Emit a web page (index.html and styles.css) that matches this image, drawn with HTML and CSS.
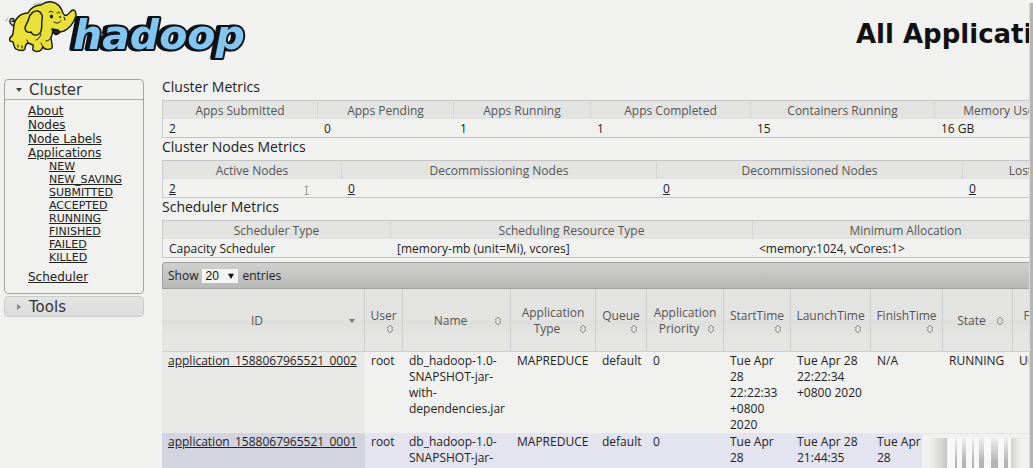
FILE: index.html
```html
<!DOCTYPE html>
<html lang="en">
<head>
<meta charset="utf-8">
<title>All Applications</title>
<link rel="stylesheet" href="styles.css">
</head>
<body>
<svg class="defs" aria-hidden="true">
  <symbol id="sort" viewBox="0 0 8 10"><path d="M1 4 4 1l3 3M1 6l3 3 3-3M1 4h1.5M5.500 4H7M1 6h1.500M5.500 6H7" fill="none" stroke="#8a8a8a" stroke-width="1"/></symbol>
  <symbol id="down" viewBox="0 0 8 10"><path d="M1 3h6L4 7z" fill="#777"/></symbol>
</svg>
<div class="page">
  <header class="top">
    <svg class="logo" viewBox="0 0 254 64" role="img" aria-label="hadoop">
      <text class="word" x="73" y="49">hadoop</text>
      <g fill="#e9e03a" stroke="#17170c" stroke-width="1.400" stroke-linejoin="round" stroke-linecap="round">
        <path d="M14 26c-3-1-5-4-4-6s4-2 4 0-2 2-2 1" fill="none"/>
        <path d="M28 13c-7 0-13 5-14 12-1 5 0 8-2 11-2 1-3 3-2 5l3 1c1 3 1 6 3 7 3 2 8 2 9 0 0-3 1-5 3-6l5 2c1 2-1 3 0 5 2 2 6 2 8 0l2-3c2 3 6 3 9 1 1-3-1-7-1-10l2-7c3 1 8 1 11 0 6-3 10-9 12-15 0-3-1-6-3-6s-3 3-6 5c-2 1-3 0-4-2-2-6-5-10-11-11-5-1-8 1-11 3-5 0-11 3-13 8z"/>
        <path d="M38 11c-4-1-8 3-9 7-1 5-4 7-4 10 0 4 4 5 6 4 2 4 6 4 9 1 3-4 1-9 2-13 1-3 0-8-4-9z"/>
        <path d="M52 29c1 5 5 8 8 3l-2-2z" fill="#222"/>
        <path d="M41 34c-1 3-2 5-5 6M49 12q2-2 4 0M57 13q2-2 3 0M54 22c3 2 5 1 7-1M64 17l1 3M51 37c-1 3-3 4-5 4M41 43l2 4M27 40l1 3M18 47v-2M22 48v-2" fill="none" stroke-width="1"/>
        <ellipse cx="51.500" cy="16.500" rx="1.600" ry="2" fill="#222" stroke="none"/>
        <circle cx="60" cy="17" r="1" fill="#222" stroke="none"/>
        <path d="M36 5q3-3 6-2M34 5l2-2M6 21q0-2 2-3" fill="none" stroke="#888" stroke-width=".8"/>
      </g>
    </svg>
    <h1>All Applications</h1>
  </header>
  <div class="body">
    <nav class="side">
      <section class="panel">
        <h3 class="panel-head open"><svg viewBox="0 0 8 8"><path d="M1 2h6L4 6z" fill="#444"/></svg>Cluster</h3>
        <ul class="links">
          <li><a href="#">About</a></li>
          <li><a href="#">Nodes</a></li>
          <li><a href="#">Node Labels</a></li>
          <li><a href="#">Applications</a>
            <ul class="states">
              <li><a href="#">NEW</a></li>
              <li><a href="#">NEW_SAVING</a></li>
              <li><a href="#">SUBMITTED</a></li>
              <li><a href="#">ACCEPTED</a></li>
              <li><a href="#">RUNNING</a></li>
              <li><a href="#">FINISHED</a></li>
              <li><a href="#">FAILED</a></li>
              <li><a href="#">KILLED</a></li>
            </ul>
          </li>
          <li><a href="#">Scheduler</a></li>
        </ul>
      </section>
      <section class="panel closed">
        <h3 class="panel-head"><svg viewBox="0 0 8 8"><path d="M2 1v6l4-3z" fill="#888"/></svg>Tools</h3>
      </section>
    </nav>
    <main class="content">
      <h2>Cluster Metrics</h2>
      <table class="metrics">
        <colgroup><col class="w155"><col class="w136"><col class="w137"><col class="w160"><col class="w184"><col class="w136"></colgroup>
        <thead><tr><th>Apps Submitted</th><th>Apps Pending</th><th>Apps Running</th><th>Apps Completed</th><th>Containers Running</th><th>Memory Used</th></tr></thead>
        <tbody><tr><td>2</td><td>0</td><td>1</td><td>1</td><td>15</td><td>16 GB</td></tr></tbody>
      </table>
      <h2>Cluster Nodes Metrics</h2>
      <table class="metrics">
        <colgroup><col class="w179"><col class="w315"><col class="w306"><col class="w155"></colgroup>
        <thead><tr><th>Active Nodes</th><th>Decommissioning Nodes</th><th>Decommissioned Nodes</th><th>Lost Nodes</th></tr></thead>
        <tbody><tr><td><a href="#">2</a></td><td><a href="#">0</a></td><td><a href="#">0</a></td><td><a href="#">0</a></td></tr></tbody>
      </table>
      <h2>Scheduler Metrics</h2>
      <table class="metrics">
        <colgroup><col class="w228"><col class="w362"><col class="w306"></colgroup>
        <thead><tr><th>Scheduler Type</th><th>Scheduling Resource Type</th><th>Minimum Allocation</th></tr></thead>
        <tbody><tr><td>Capacity Scheduler</td><td>[memory-mb (unit=Mi), vcores]</td><td>&lt;memory:1024, vCores:1&gt;</td></tr></tbody>
      </table>
      <div class="toolbar">
        <label for="len">Show</label>
        <span class="picker"><select id="len"><option>20</option><option>50</option></select><svg viewBox="0 0 8 8"><path d="M0 1h8L4 8z" fill="#111"/></svg></span>
        <span>entries</span>
      </div>
      <table class="apps">
        <colgroup><col class="w203"><col class="w38"><col class="w108"><col class="w85"><col class="w51"><col class="w77"><col class="w67"><col class="w80"><col class="w72"><col class="w70"><col class="w83"></colgroup>
        <thead><tr>
          <th><div class="sort"><span>ID</span><svg><use href="#down"/></svg></div></th>
          <th>User<div class="sort low"><span></span><svg><use href="#sort"/></svg></div></th>
          <th><div class="sort"><span>Name</span><svg><use href="#sort"/></svg></div></th>
          <th>Application<div class="sort"><span>Type</span><svg><use href="#sort"/></svg></div></th>
          <th>Queue<div class="sort low"><span></span><svg><use href="#sort"/></svg></div></th>
          <th>Application<div class="sort"><span>Priority</span><svg><use href="#sort"/></svg></div></th>
          <th>StartTime<div class="sort low"><span></span><svg><use href="#sort"/></svg></div></th>
          <th>LaunchTime<div class="sort low"><span></span><svg><use href="#sort"/></svg></div></th>
          <th>FinishTime<div class="sort low"><span></span><svg><use href="#sort"/></svg></div></th>
          <th><div class="sort"><span>State</span><svg><use href="#sort"/></svg></div></th>
          <th>FinalStatus<div class="sort low"><span></span><svg><use href="#sort"/></svg></div></th>
        </tr></thead>
        <tbody>
          <tr>
            <td><a href="#">application_1588067965521_0002</a></td><td>root</td>
            <td>db_hadoop-1.0-<br>SNAPSHOT-jar-<br>with-<br>dependencies.jar</td>
            <td>MAPREDUCE</td><td>default</td><td>0</td>
            <td>Tue Apr<br>28<br>22:22:33<br>+0800<br>2020</td>
            <td>Tue Apr 28<br>22:22:34<br>+0800 2020</td>
            <td>N/A</td><td>RUNNING</td><td>UNDEFINED</td>
          </tr>
          <tr class="even">
            <td><a href="#">application_1588067965521_0001</a></td><td>root</td>
            <td>db_hadoop-1.0-<br>SNAPSHOT-jar-<br>with-<br>dependencies.jar</td>
            <td>MAPREDUCE</td><td>default</td><td>0</td>
            <td>Tue Apr<br>28<br>21:44:35<br>+0800<br>2020</td>
            <td>Tue Apr 28<br>21:44:35<br>+0800 2020</td>
            <td>Tue Apr<br>28</td><td></td><td></td>
          </tr>
        </tbody>
      </table>
    </main>
  </div>
</div>
<svg class="cursor" viewBox="0 0 5 9" aria-hidden="true"><path d="M.5.5h4M.5 8.5h4M2.5.5v8" stroke="#999" fill="none"/></svg>
<div class="mark" aria-hidden="true">
  <svg viewBox="0 0 107 34">
    <defs>
      <linearGradient id="fade" x1="0" y1="0" x2="0" y2="1"><stop offset="0" stop-color="#b4b4b4" stop-opacity=".15"/><stop offset=".8" stop-color="#b4b4b4"/></linearGradient>
      <linearGradient id="edge" x1="0" y1="0" x2="1" y2="0"><stop offset="0" stop-color="#ddd" stop-opacity=".2"/><stop offset="1" stop-color="#c4c4c4"/></linearGradient>
      <linearGradient id="edge2" x1="1" y1="0" x2="0" y2="0"><stop offset="0" stop-color="#ddd" stop-opacity=".1"/><stop offset="1" stop-color="#d0d0d0"/></linearGradient>
    </defs>
    <path d="M26 4h66v30H26z" fill="#f8f8f8"/>
    <path d="M8 4h17v30H8z" fill="url(#edge)"/>
    <path d="M33 4h2v30h-2zM40 4h4v30h-4zM50 4h2v30h-2zM57 4h5v30h-5zM69 4h7v30h-7zM82 4h4v30h-4z" fill="url(#fade)"/>
    <path d="M89 4h10v30H89z" fill="url(#edge2)"/>
  </svg>
</div>
<div class="scroll"></div>
</body>
</html>
```
FILE: styles.css
```css
* { box-sizing: border-box; }
body {
  margin: 0;
  height: 100vh;
  display: flex;
  overflow: hidden;
  position: relative;
  background: #f1f1f0;
  color: #222;
  font: 12px/16px "Open Sans", "Noto Sans", sans-serif;
}
a { color: inherit; text-decoration: underline; }
.defs { position: absolute; width: 0; height: 0; }
.page { flex: 1; min-width: 0; overflow: hidden; }
.scroll { width: 4px; margin-top: 3px; background: #b5b5b5; border-left: 1px solid #dcdcdc; }

.top { display: flex; align-items: center; height: 64px; }
.logo { width: 254px; height: 64px; flex: none; }
.word {
  font: italic bold 41px "DejaVu Sans", sans-serif;
  fill: #83c5ee;
  stroke: #0c1218;
  stroke-width: 4px;
  stroke-linejoin: round;
  paint-order: stroke;
  filter: drop-shadow(-3px 0 0 #0c1218);
}
h1 {
  margin: 4px 0 0 602px;
  white-space: nowrap;
  font: bold 26px/32px "DejaVu Sans", sans-serif;
  color: #111;
}

.body { display: flex; align-items: flex-start; padding-top: 15px; }
.side {
  width: 140px;
  flex: none;
  margin: 0 18px 0 4px;
  font-family: "DejaVu Sans", sans-serif;
}
.panel { border: 1px solid #a5a5a5; border-radius: 4px; margin-bottom: 2px; }
.panel-head {
  display: flex;
  align-items: center;
  gap: 6px;
  margin: 0;
  padding: 1px 0 0 10px;
  font-size: 15px;
  font-weight: normal;
  line-height: 18px;
  color: #333;
}
.panel-head svg { width: 8px; height: 8px; }
.open { border-bottom: 1px solid #aaa; }
.closed { border-color: #ccc; background: linear-gradient(#e4e4e4, #dcdcdc); }
.side ul { list-style: none; margin: 0; padding: 0; }
.side .links { padding: 4px 0 9px 23px; font-size: 12px; line-height: 14px; }
.side .states { padding: 0 0 6px 21px; font-size: 11px; line-height: 13px; }

.content { flex: 1; min-width: 0; overflow: hidden; }
h2 {
  margin: 0;
  padding-bottom: 4px;
  font-size: 14px;
  font-weight: normal;
  line-height: 18px;
  color: #222;
}
.content h2:first-child { margin-top: -1px; }
table { table-layout: fixed; width: 0; border-spacing: 0; border-collapse: separate; }
th { font-weight: normal; color: #555; padding: 0; }
td { padding: 0 0 0 6px; white-space: nowrap; text-align: left; vertical-align: top; }
.metrics { border: 1px solid #c4c4c4; border-left-color: #ccc; }
.metrics th { padding-top: 2px; background: #e3e3e2; border-right: 1px solid #d5d5d5; }
.metrics td { padding-top: 2px; }
.toolbar {
  display: flex;
  align-items: center;
  gap: 4px;
  height: 27px;
  margin-top: 4px;
  padding-left: 5px;
  border: 1px solid #a0a0a0;
  border-right: 0;
  border-radius: 4px 0 0 0;
  background: linear-gradient(#d0d0cf, #b8b8b7);
}
.picker { display: flex; align-items: center; width: 36px; height: 14px; background: #f4f4f4; }
.picker select {
  appearance: none;
  width: 26px;
  height: 14px;
  padding: 0 0 0 3px;
  border: 0;
  background: none;
  font: 12px/14px "Liberation Sans", sans-serif;
  color: #111;
}
.picker svg { width: 6px; height: 6px; flex: none; }
.apps th {
  height: 63px;
  padding-top: 2px;
  border-right: 1px solid #cdcdd2;
  border-bottom: 1px solid #d0d0d0;
  background: linear-gradient(#e3e3e2 50%, #dededd 52%, #e5e5e4 75%);
}
.sort { display: flex; align-items: center; padding: 0 8px 0 4px; }
.sort span { flex: 1; }
.sort svg { width: 8px; height: 10px; flex: none; }
.low { height: 11px; }
.apps td { padding-top: 1px; }
.apps td:first-child { background: #e9e9e8; }
.apps .even td { background: #e4e4f1; }
.apps .even td:first-child { background: #d3d4df; }

.mark { position: absolute; right: 4px; bottom: 0; width: 107px; height: 34px; background: #f1f1f0; }
.mark svg { display: block; width: 107px; height: 34px; }
.cursor { position: absolute; left: 304px; top: 186px; width: 5px; height: 9px; }

.w38 { width: 38px; }
.w51 { width: 51px; }
.w67 { width: 67px; }
.w70 { width: 70px; }
.w72 { width: 72px; }
.w77 { width: 77px; }
.w80 { width: 80px; }
.w83 { width: 83px; }
.w85 { width: 85px; }
.w108 { width: 108px; }
.w136 { width: 136px; }
.w137 { width: 137px; }
.w155 { width: 155px; }
.w160 { width: 160px; }
.w179 { width: 179px; }
.w184 { width: 184px; }
.w203 { width: 203px; }
.w228 { width: 228px; }
.w306 { width: 306px; }
.w315 { width: 315px; }
.w362 { width: 362px; }
```
